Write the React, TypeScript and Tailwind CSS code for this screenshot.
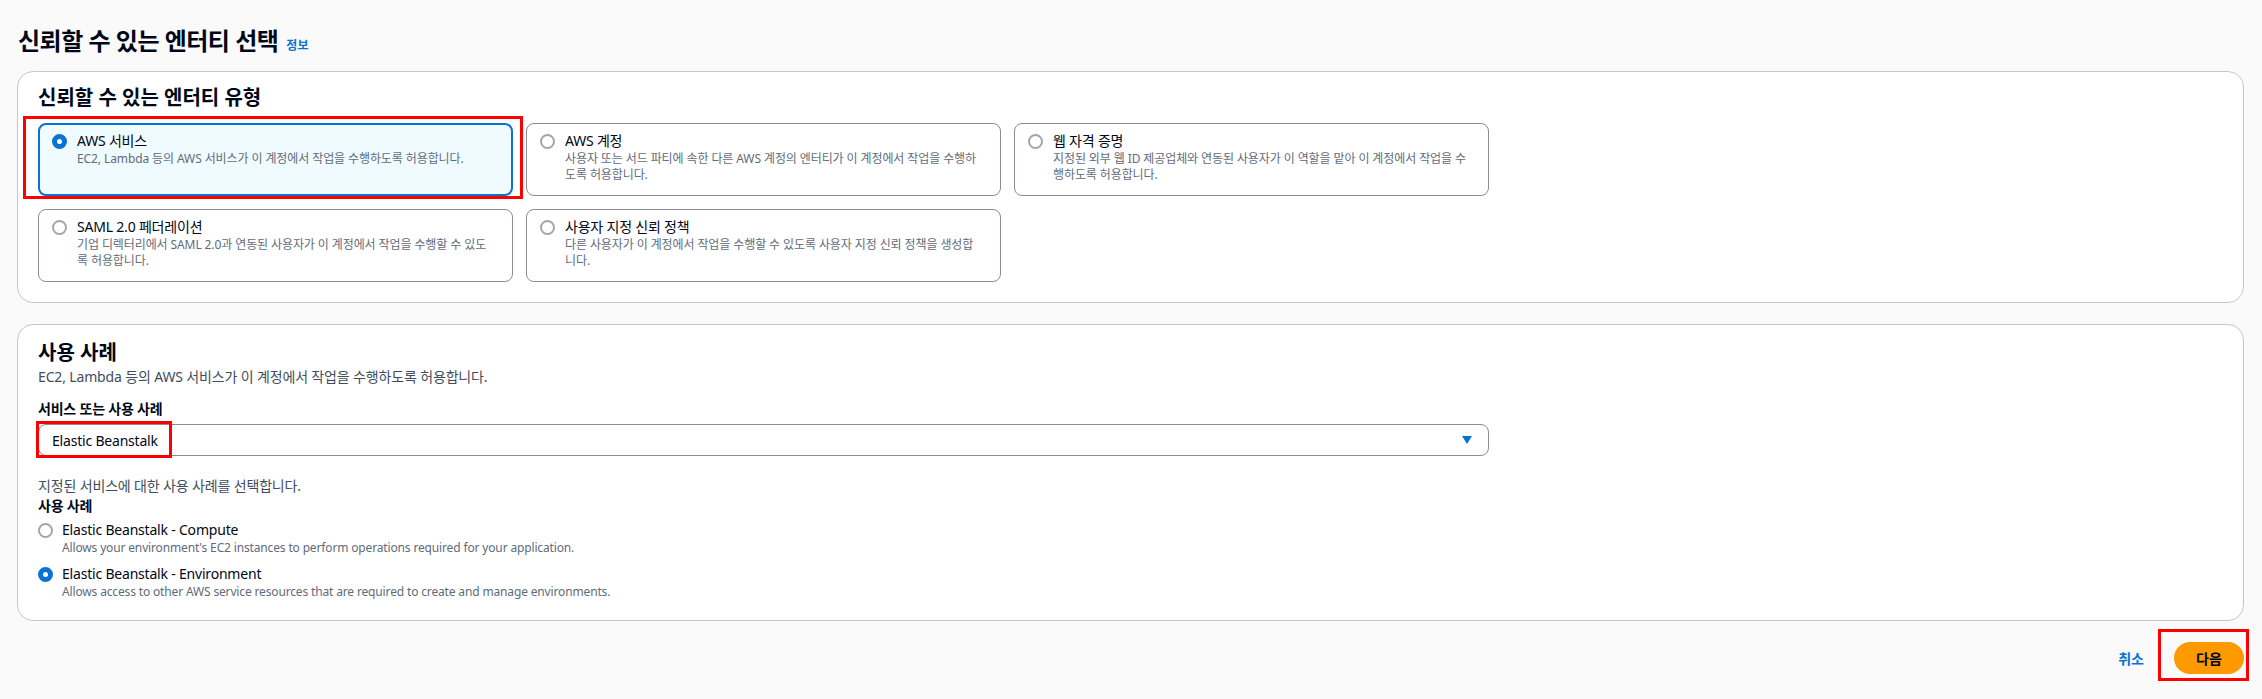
import React from "react";

type Tile = {
  title: string;
  lines: string[];
  checked?: boolean;
};

const tiles: Tile[] = [
  {
    title: "AWS 서비스",
    lines: ["EC2, Lambda 등의 AWS 서비스가 이 계정에서 작업을 수행하도록 허용합니다."],
    checked: true,
  },
  {
    title: "AWS 계정",
    lines: [
      "사용자 또는 서드 파티에 속한 다른 AWS 계정의 엔터티가 이 계정에서 작업을 수행하",
      "도록 허용합니다.",
    ],
  },
  {
    title: "웹 자격 증명",
    lines: [
      "지정된 외부 웹 ID 제공업체와 연동된 사용자가 이 역할을 맡아 이 계정에서 작업을 수",
      "행하도록 허용합니다.",
    ],
  },
  {
    title: "SAML 2.0 페더레이션",
    lines: [
      "기업 디렉터리에서 SAML 2.0과 연동된 사용자가 이 계정에서 작업을 수행할 수 있도",
      "록 허용합니다.",
    ],
  },
  {
    title: "사용자 지정 신뢰 정책",
    lines: [
      "다른 사용자가 이 계정에서 작업을 수행할 수 있도록 사용자 지정 신뢰 정책을 생성합",
      "니다.",
    ],
  },
];

const useCases = [
  {
    title: "Elastic Beanstalk - Compute",
    desc: "Allows your environment's EC2 instances to perform operations required for your application.",
  },
  {
    title: "Elastic Beanstalk - Environment",
    desc: "Allows access to other AWS service resources that are required to create and manage environments.",
    checked: true,
  },
];

const Radio = ({ checked }: { checked?: boolean }) => (
  <span
    className={
      checked
        ? "block h-[15px] w-[15px] shrink-0 rounded-full border-[5px] border-[#0972d3] bg-white"
        : "block h-[15px] w-[15px] shrink-0 rounded-full border-2 border-[#a4a4ad] bg-white"
    }
  />
);

const TileCard = ({ tile }: { tile: Tile }) => (
  <div
    className={
      tile.checked
        ? "flex gap-[10px] rounded-[8px] border-2 border-[#0972d3] bg-[#f0fbff] pl-[12px] pr-[19px] pt-[6px]"
        : "flex gap-[10px] rounded-[8px] border border-[#8c8c94] bg-white pl-[13px] pr-[20px] pt-[7px]"
    }
  >
    <div className="pt-[3px]">
      <Radio checked={tile.checked} />
    </div>
    <div>
      <div className="text-[14px] leading-[20px] tracking-[-0.2px]">{tile.title}</div>
      <div className="text-[12px] leading-[16px] tracking-[-0.1px] text-[#5f6b7a]">
        {tile.lines.map((line, i) => (
          <div key={i}>{line}</div>
        ))}
      </div>
    </div>
  </div>
);

export default function App() {
  return (
    <div className="min-h-[699px] bg-[#fafafa] pl-[17px] pr-[18px] pt-[26px] font-['Noto_Sans','Noto_Sans_CJK_KR',sans-serif] text-[#000716]">
      <div className="flex items-baseline gap-[8px] pl-[1px]">
        <h1 className="text-[24px] font-bold leading-[30px] tracking-[-0.5px]">신뢰할 수 있는 엔터티 선택</h1>
        <a className="text-[12px] font-bold text-[#0972d3]">정보</a>
      </div>

      <section className="mt-[15px] rounded-[16px] border border-[#c6c6cd] bg-white px-[20px] pb-[20px] pt-[14px]">
        <h2 className="text-[20px] font-bold leading-[24px]">신뢰할 수 있는 엔터티 유형</h2>
        <div className="relative mt-[13px] grid w-[1451px] grid-cols-3 auto-rows-[73px] gap-[13px]">
          {tiles.map((tile) => (
            <TileCard key={tile.title} tile={tile} />
          ))}
          <div className="pointer-events-none absolute left-[-15px] top-[-7px] h-[83px] w-[500px] border-[3px] border-[#ff0000]" />
        </div>
      </section>

      <section className="mt-[21px] rounded-[16px] border border-[#c6c6cd] bg-white px-[20px] pb-[20px] pt-[16px]">
        <h2 className="text-[20px] font-bold leading-[24px]">사용 사례</h2>
        <p className="mt-[2px] text-[14px] leading-[20px] tracking-[-0.15px] text-[#414d5c]">
          EC2, Lambda 등의 AWS 서비스가 이 계정에서 작업을 수행하도록 허용합니다.
        </p>

        <div className="mt-[12px] text-[14px] font-bold leading-[20px] tracking-[-0.2px]">서비스 또는 사용 사례</div>
        <div className="relative mt-[5px] flex h-[32px] w-[1451px] items-center justify-between rounded-[8px] border border-[#8c8c94] bg-white pl-[13px] pr-[16px]">
          <span className="text-[14px] tracking-[-0.2px]">Elastic Beanstalk</span>
          <svg width="10" height="8" viewBox="0 0 10 8">
            <path d="M0 0H10L5 8Z" fill="#0972d3" />
          </svg>
          <div className="pointer-events-none absolute left-[-3px] top-[-4px] h-[37px] w-[136px] border-[3px] border-[#ff0000]" />
        </div>

        <p className="mt-[20px] text-[14px] leading-[20px] tracking-[-0.15px] text-[#414d5c]">
          지정된 서비스에 대한 사용 사례를 선택합니다.
        </p>
        <div className="text-[14px] font-bold leading-[20px] tracking-[-0.2px]">사용 사례</div>

        <div className="mt-[4px] flex flex-col gap-[8px]">
          {useCases.map((u) => (
            <div key={u.title} className="flex gap-[9px]">
              <div className="pt-[3px]">
                <Radio checked={u.checked} />
              </div>
              <div>
                <div className="text-[14px] leading-[20px] tracking-[-0.2px]">{u.title}</div>
                <div className="text-[12px] leading-[16px] tracking-[-0.15px] text-[#5f6b7a]">{u.desc}</div>
              </div>
            </div>
          ))}
        </div>
      </section>

      <div className="mt-[21px] flex items-center justify-end gap-[30px] pb-[26px]">
        <a className="text-[14px] font-bold text-[#0972d3]">취소</a>
        <div className="relative">
          <button className="h-[32px] w-[70px] rounded-full bg-[#ff9900] text-[14px] font-bold text-[#000716]">
            다음
          </button>
          <div className="pointer-events-none absolute left-[-16px] top-[-13px] h-[52px] w-[91px] border-[3px] border-[#ff0000]" />
        </div>
      </div>
    </div>
  );
}
